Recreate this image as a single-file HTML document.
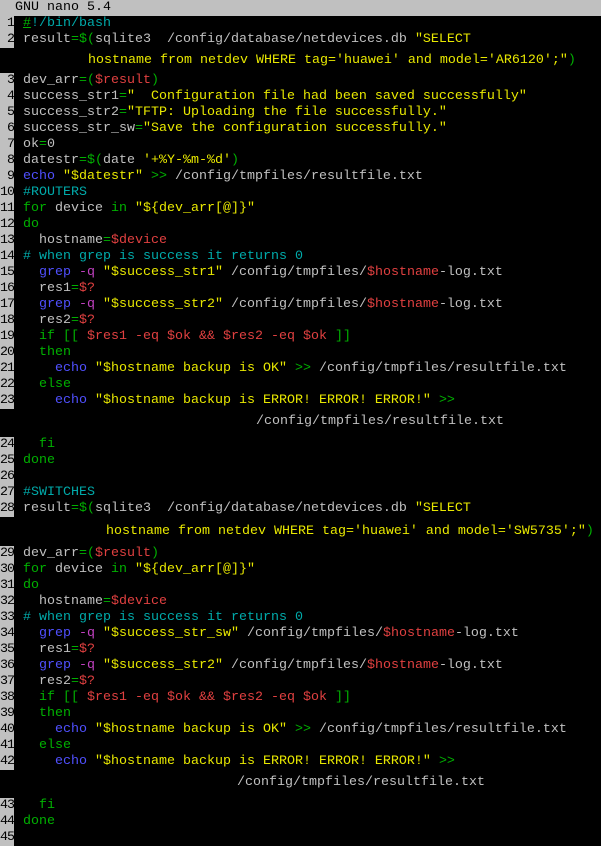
<!DOCTYPE html>
<html><head><meta charset="utf-8"><style>
body{margin:0;width:601px;height:841px;background:#000;overflow:hidden;position:relative;font-family:"Liberation Mono",monospace;font-size:13.33px;color:#c0c0c0}
.t{position:absolute;left:0;top:0;width:601px;height:16px;background:#c0c0c0;color:#000;line-height:16px}
.l{position:absolute;left:0;height:16px;line-height:16px;white-space:pre;width:601px}
.n{position:absolute;left:0;top:0;width:14px;height:16px;background:#c0c0c0;color:#000;overflow:hidden;direction:rtl;text-align:right;letter-spacing:-1px}
.x{position:absolute;left:23px;top:0}
.c{position:absolute;height:16px;line-height:16px;white-space:pre}
.g{color:#00b000}.y{color:#e8e800}.r{color:#e04040}.b{color:#5050ff}.m{color:#c040c0}.cy{color:#00aaaa}
</style></head><body>
<div class="t"><span style="position:absolute;left:15px">GNU nano 5.4</span></div>

<div class="l" style="top:16px"><span class="n">1</span><span class="x"><span class="g" style="text-decoration:underline">#</span><span class="cy">!/bin/bash</span></span></div>
<div class="l" style="top:32px"><span class="n">2</span><span class="x">result<span class="g">=$(</span>sqlite3  /config/database/netdevices.db <span class="y">"SELECT</span></span></div>
<div class="c y" style="top:53px;left:88px">hostname from netdev WHERE tag='huawei' and model='AR6120';"<span class="g">)</span></div>

<div class="l" style="top:73px"><span class="n">3</span><span class="x">dev_arr<span class="g">=(</span><span class="r">$result</span><span class="g">)</span></span></div>
<div class="l" style="top:89px"><span class="n">4</span><span class="x">success_str1<span class="g">=</span><span class="y">"  Configuration file had been saved successfully"</span></span></div>
<div class="l" style="top:105px"><span class="n">5</span><span class="x">success_str2<span class="g">=</span><span class="y">"TFTP: Uploading the file successfully."</span></span></div>
<div class="l" style="top:121px"><span class="n">6</span><span class="x">success_str_sw<span class="g">=</span><span class="y">"Save the configuration successfully."</span></span></div>
<div class="l" style="top:137px"><span class="n">7</span><span class="x">ok<span class="g">=</span>0</span></div>
<div class="l" style="top:153px"><span class="n">8</span><span class="x">datestr<span class="g">=$(</span>date <span class="y">'+%Y-%m-%d'</span><span class="g">)</span></span></div>
<div class="l" style="top:169px"><span class="n">9</span><span class="x"><span class="b">echo</span> <span class="y">"$datestr"</span> <span class="g">&gt;&gt;</span> /config/tmpfiles/resultfile.txt</span></div>
<div class="l" style="top:185px"><span class="n">10</span><span class="x cy">#ROUTERS</span></div>
<div class="l" style="top:201px"><span class="n">11</span><span class="x"><span class="g">for</span> device <span class="g">in</span> <span class="y">"${dev_arr[@]}"</span></span></div>
<div class="l" style="top:217px"><span class="n">12</span><span class="x g">do</span></div>
<div class="l" style="top:233px"><span class="n">13</span><span class="x">  hostname<span class="g">=</span><span class="r">$device</span></span></div>
<div class="l" style="top:249px"><span class="n">14</span><span class="x cy"># when grep is success it returns 0</span></div>
<div class="l" style="top:265px"><span class="n">15</span><span class="x">  <span class="b">grep</span> <span class="m">-q</span> <span class="y">"$success_str1"</span> /config/tmpfiles/<span class="r">$hostname</span>-log.txt</span></div>
<div class="l" style="top:281px"><span class="n">16</span><span class="x">  res1<span class="g">=</span><span class="r">$?</span></span></div>
<div class="l" style="top:297px"><span class="n">17</span><span class="x">  <span class="b">grep</span> <span class="m">-q</span> <span class="y">"$success_str2"</span> /config/tmpfiles/<span class="r">$hostname</span>-log.txt</span></div>
<div class="l" style="top:313px"><span class="n">18</span><span class="x">  res2<span class="g">=</span><span class="r">$?</span></span></div>
<div class="l" style="top:329px"><span class="n">19</span><span class="x">  <span class="g">if [[</span> <span class="r">$res1 -eq $ok &amp;&amp; $res2 -eq $ok</span> <span class="g">]]</span></span></div>
<div class="l" style="top:345px"><span class="n">20</span><span class="x g">  then</span></div>
<div class="l" style="top:361px"><span class="n">21</span><span class="x">    <span class="b">echo</span> <span class="y">"$hostname backup is OK"</span> <span class="g">&gt;&gt;</span> /config/tmpfiles/resultfile.txt</span></div>
<div class="l" style="top:377px"><span class="n">22</span><span class="x g">  else</span></div>
<div class="l" style="top:393px"><span class="n">23</span><span class="x">    <span class="b">echo</span> <span class="y">"$hostname backup is ERROR! ERROR! ERROR!"</span> <span class="g">&gt;&gt;</span></span></div>
<div class="c" style="top:414px;left:256px">/config/tmpfiles/resultfile.txt</div>

<div class="l" style="top:437px"><span class="n">24</span><span class="x g">  fi</span></div>
<div class="l" style="top:453px"><span class="n">25</span><span class="x g">done</span></div>
<div class="l" style="top:469px"><span class="n">26</span></div>
<div class="l" style="top:485px"><span class="n">27</span><span class="x cy">#SWITCHES</span></div>
<div class="l" style="top:501px"><span class="n">28</span><span class="x">result<span class="g">=$(</span>sqlite3  /config/database/netdevices.db <span class="y">"SELECT</span></span></div>
<div class="c y" style="top:524px;left:106px">hostname from netdev WHERE tag='huawei' and model='SW5735';"<span class="g">)</span></div>

<div class="l" style="top:546px"><span class="n">29</span><span class="x">dev_arr<span class="g">=(</span><span class="r">$result</span><span class="g">)</span></span></div>
<div class="l" style="top:562px"><span class="n">30</span><span class="x"><span class="g">for</span> device <span class="g">in</span> <span class="y">"${dev_arr[@]}"</span></span></div>
<div class="l" style="top:578px"><span class="n">31</span><span class="x g">do</span></div>
<div class="l" style="top:594px"><span class="n">32</span><span class="x">  hostname<span class="g">=</span><span class="r">$device</span></span></div>
<div class="l" style="top:610px"><span class="n">33</span><span class="x cy"># when grep is success it returns 0</span></div>
<div class="l" style="top:626px"><span class="n">34</span><span class="x">  <span class="b">grep</span> <span class="m">-q</span> <span class="y">"$success_str_sw"</span> /config/tmpfiles/<span class="r">$hostname</span>-log.txt</span></div>
<div class="l" style="top:642px"><span class="n">35</span><span class="x">  res1<span class="g">=</span><span class="r">$?</span></span></div>
<div class="l" style="top:658px"><span class="n">36</span><span class="x">  <span class="b">grep</span> <span class="m">-q</span> <span class="y">"$success_str2"</span> /config/tmpfiles/<span class="r">$hostname</span>-log.txt</span></div>
<div class="l" style="top:674px"><span class="n">37</span><span class="x">  res2<span class="g">=</span><span class="r">$?</span></span></div>
<div class="l" style="top:690px"><span class="n">38</span><span class="x">  <span class="g">if [[</span> <span class="r">$res1 -eq $ok &amp;&amp; $res2 -eq $ok</span> <span class="g">]]</span></span></div>
<div class="l" style="top:706px"><span class="n">39</span><span class="x g">  then</span></div>
<div class="l" style="top:722px"><span class="n">40</span><span class="x">    <span class="b">echo</span> <span class="y">"$hostname backup is OK"</span> <span class="g">&gt;&gt;</span> /config/tmpfiles/resultfile.txt</span></div>
<div class="l" style="top:738px"><span class="n">41</span><span class="x g">  else</span></div>
<div class="l" style="top:754px"><span class="n">42</span><span class="x">    <span class="b">echo</span> <span class="y">"$hostname backup is ERROR! ERROR! ERROR!"</span> <span class="g">&gt;&gt;</span></span></div>
<div class="c" style="top:775px;left:237px">/config/tmpfiles/resultfile.txt</div>

<div class="l" style="top:798px"><span class="n">43</span><span class="x g">  fi</span></div>
<div class="l" style="top:814px"><span class="n">44</span><span class="x g">done</span></div>
<div class="l" style="top:830px"><span class="n">45</span></div>
</body></html>
